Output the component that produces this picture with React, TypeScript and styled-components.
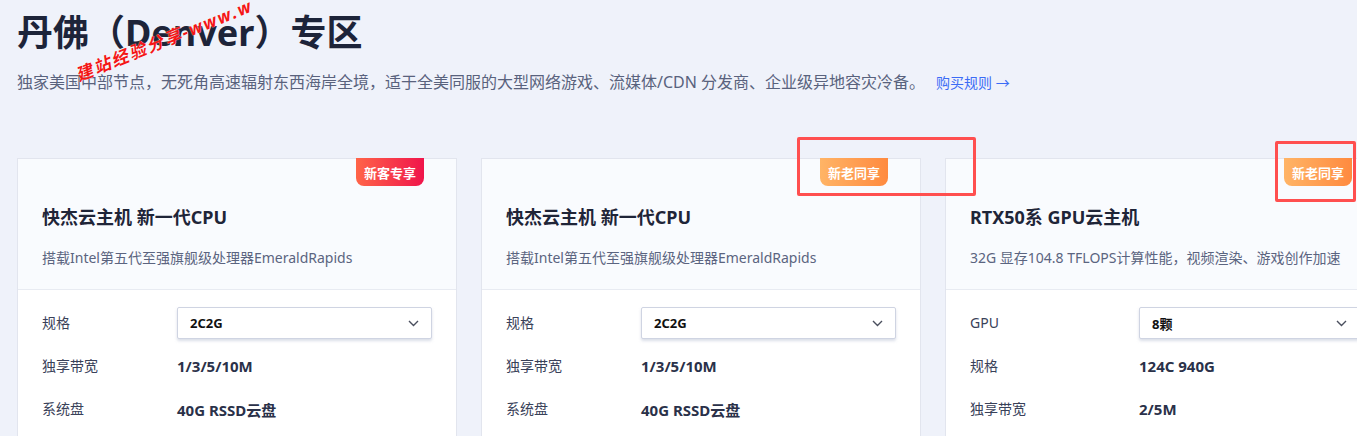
import React from 'react'
import styled, { createGlobalStyle } from 'styled-components'

const GlobalStyle = createGlobalStyle`
  html, body {
    margin: 0;
    padding: 0;
    background: #eff2fa;
    overflow: hidden;
  }
  body {
    font-family: "Noto Sans", "Noto Sans CJK SC", sans-serif;
  }
`

const Page = styled.div`
  position: relative;
  width: 1357px;
  height: 436px;
  padding: 11px 0 0 17px;
  box-sizing: border-box;
  overflow: hidden;
`

const Title = styled.h1`
  margin: 0;
  font-size: 36px;
  line-height: 44px;
  font-weight: 700;
  color: #1d2439;
`

const Intro = styled.p`
  margin: 15px 0 0;
  font-size: 16px;
  line-height: 24px;
  color: #59627d;
  white-space: nowrap;
`

const RuleLink = styled.a`
  margin-left: 11px;
  font-size: 14px;
  color: #3b6cf6;
  text-decoration: none;
`

const CardRow = styled.div`
  display: grid;
  grid-template-columns: repeat(3, 440px);
  gap: 24px;
  margin-top: 63px;
`

const Card = styled.div`
  position: relative;
  background: #ffffff;
  border: 1px solid #e2e5ee;
  height: 300px;
`

const Badge = styled.span<{ $tone: 'red' | 'orange' }>`
  position: absolute;
  top: -1px;
  right: 32px;
  width: 68px;
  height: 28px;
  display: flex;
  align-items: center;
  justify-content: center;
  border-radius: 0 0 8px 8px;
  font-size: 13px;
  font-weight: 700;
  color: #fff;
  background: ${({ $tone }) =>
    $tone === 'red'
      ? 'linear-gradient(90deg, #ff6448, #f0154b)'
      : 'linear-gradient(90deg, #ffb466, #ff8a3f)'};
`

const CardHead = styled.div`
  background: #f9fbfe;
  padding: 45px 24px 20px;
  border-bottom: 1px solid #e8ebf2;
`

const CardName = styled.div`
  font-size: 18px;
  line-height: 26px;
  font-weight: 700;
  color: #1f2538;
`

const CardDesc = styled.div`
  margin-top: 17px;
  font-size: 14px;
  line-height: 22px;
  color: #5b6480;
  white-space: nowrap;
`

const CardBody = styled.div`
  display: flex;
  flex-direction: column;
  gap: 11px;
  padding: 17px 24px 0;
`

const SpecRow = styled.div<{ $labelWidth: number }>`
  display: grid;
  grid-template-columns: ${({ $labelWidth }) => $labelWidth}px 1fr;
  align-items: center;
  min-height: 32px;
`

const Label = styled.span`
  font-size: 14px;
  line-height: 20px;
  color: #394159;
`

const Value = styled.span`
  font-size: 15px;
  font-weight: 700;
  color: #2a3149;
`

const Select = styled.div`
  height: 32px;
  box-sizing: border-box;
  display: flex;
  align-items: center;
  justify-content: space-between;
  padding: 0 12px 0 12px;
  border: 1px solid #cfd4e2;
  border-radius: 2px;
  box-shadow: 0 2px 3px rgba(150, 160, 190, 0.35);
  font-size: 13px;
  font-weight: 700;
  color: #111;
  background: #fff;
`

const Watermark = styled.span`
  position: absolute;
  left: 76px;
  top: 62px;
  transform: rotate(-22deg);
  transform-origin: left center;
  font-size: 17px;
  letter-spacing: 2px;
  font-style: italic;
  font-weight: 700;
  color: #f41616;
  text-shadow: 0 0 1px #fff;
  white-space: nowrap;
  pointer-events: none;
`

const Marker = styled.div`
  position: absolute;
  border: 3px solid #ff4f4f;
  border-radius: 2px;
  box-sizing: border-box;
  pointer-events: none;
`

const Chevron = () => (
  <svg width="11" height="7" viewBox="0 0 11 7" fill="none">
    <path d="M1 1l4.5 4.5L10 1" stroke="#4a4f5e" strokeWidth="1.4" />
  </svg>
)

type Spec = { label: string; value: string; select?: boolean }

type Plan = {
  name: string
  desc: string
  badge: string
  tone: 'red' | 'orange'
  labelWidth: number
  specs: Spec[]
}

const plans: Plan[] = [
  {
    name: '快杰云主机 新一代CPU',
    desc: '搭载Intel第五代至强旗舰级处理器EmeraldRapids',
    badge: '新客专享',
    tone: 'red',
    labelWidth: 135,
    specs: [
      { label: '规格', value: '2C2G', select: true },
      { label: '独享带宽', value: '1/3/5/10M' },
      { label: '系统盘', value: '40G RSSD云盘' },
    ],
  },
  {
    name: '快杰云主机 新一代CPU',
    desc: '搭载Intel第五代至强旗舰级处理器EmeraldRapids',
    badge: '新老同享',
    tone: 'orange',
    labelWidth: 135,
    specs: [
      { label: '规格', value: '2C2G', select: true },
      { label: '独享带宽', value: '1/3/5/10M' },
      { label: '系统盘', value: '40G RSSD云盘' },
    ],
  },
  {
    name: 'RTX50系 GPU云主机',
    desc: '32G 显存104.8 TFLOPS计算性能，视频渲染、游戏创作加速',
    badge: '新老同享',
    tone: 'orange',
    labelWidth: 169,
    specs: [
      { label: 'GPU', value: '8颗', select: true },
      { label: '规格', value: '124C 940G' },
      { label: '独享带宽', value: '2/5M' },
    ],
  },
]

const App = () => {
  return (
    <>
      <GlobalStyle />
      <Page>
        <Title>丹佛（Denver）专区</Title>
        <Intro>
          独家美国中部节点，无死角高速辐射东西海岸全境，适于全美同服的大型网络游戏、流媒体/CDN
          分发商、企业级异地容灾冷备。
          <RuleLink href="#">购买规则 →</RuleLink>
        </Intro>
        <CardRow>
          {plans.map((plan, idx) => (
            <Card key={idx}>
              <Badge $tone={plan.tone}>{plan.badge}</Badge>
              <CardHead>
                <CardName>{plan.name}</CardName>
                <CardDesc>{plan.desc}</CardDesc>
              </CardHead>
              <CardBody>
                {plan.specs.map((spec) => (
                  <SpecRow key={spec.label} $labelWidth={plan.labelWidth}>
                    <Label>{spec.label}</Label>
                    {spec.select ? (
                      <Select>
                        {spec.value}
                        <Chevron />
                      </Select>
                    ) : (
                      <Value>{spec.value}</Value>
                    )}
                  </SpecRow>
                ))}
              </CardBody>
            </Card>
          ))}
        </CardRow>
        <Watermark>建站经验分享-www.w</Watermark>
        <Marker style={{ left: 797, top: 137, width: 179, height: 59 }} />
        <Marker style={{ left: 1275, top: 141, width: 81, height: 61 }} />
      </Page>
    </>
  )
}

export default App
